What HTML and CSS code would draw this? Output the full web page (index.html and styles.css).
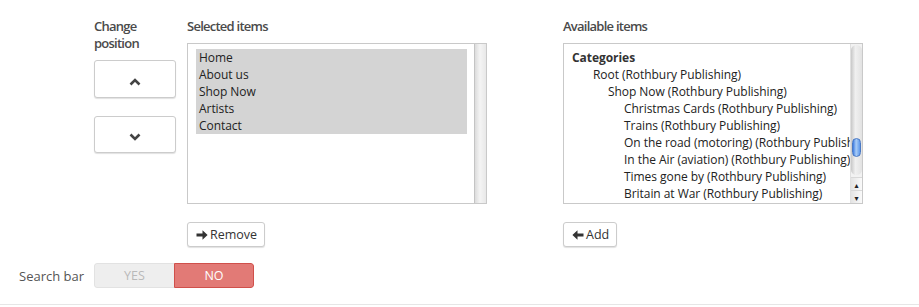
FILE: index.html
```html
<!DOCTYPE html>
<html lang="en">
<head>
    <meta charset="UTF-8">
    <title>Menu items</title>
    <link rel="stylesheet" href="styles.css">
</head>
<body>
    <div class="editor">
        <div class="picker">
            <!-- Move buttons -->
            <div class="position-col">
                <h4 class="col-title">Change position</h4>
                <button class="move-btn up" type="button">
                    <svg width="12" height="8" viewBox="0 0 12 8"><path d="M1.5 6.5L6 2l4.5 4.5" fill="none" stroke="#444" stroke-width="2.6"/></svg>
                </button>
                <button class="move-btn down" type="button">
                    <svg width="12" height="8" viewBox="0 0 12 8"><path d="M1.5 1.5L6 6l4.5-4.5" fill="none" stroke="#444" stroke-width="2.6"/></svg>
                </button>
            </div>

            <!-- Selected items -->
            <div class="list-col">
                <h4 class="col-title">Selected items</h4>
                <div class="listbox">
                    <div class="listbox-body">
                        <div class="selected-group">
                            <div class="opt">Home</div>
                            <div class="opt">About us</div>
                            <div class="opt">Shop Now</div>
                            <div class="opt">Artists</div>
                            <div class="opt">Contact</div>
                        </div>
                    </div>
                    <div class="track plain"></div>
                </div>
                <button class="act-btn" type="button">
                    <svg width="12" height="12" viewBox="0 0 12 12"><path d="M0.5 4.6h6V1.2L11.6 6 6.5 10.8V7.4h-6z" fill="#333"/></svg>
                    Remove
                </button>
            </div>

            <!-- Available items -->
            <div class="list-col available">
                <h4 class="col-title">Available items</h4>
                <div class="listbox">
                    <div class="listbox-body">
                        <div class="group-label">Categories</div>
                        <div class="opt lvl1">Root (Rothbury Publishing)</div>
                        <div class="opt lvl2">Shop Now (Rothbury Publishing)</div>
                        <div class="opt lvl3">Christmas Cards (Rothbury Publishing)</div>
                        <div class="opt lvl3">Trains (Rothbury Publishing)</div>
                        <div class="opt lvl3">On the road (motoring) (Rothbury Publishing)</div>
                        <div class="opt lvl3">In the Air (aviation) (Rothbury Publishing)</div>
                        <div class="opt lvl3">Times gone by (Rothbury Publishing)</div>
                        <div class="opt lvl3">Britain at War (Rothbury Publishing)</div>
                    </div>
                    <div class="track aqua">
                        <div class="aqua-rail">
                            <div class="aqua-thumb"></div>
                        </div>
                        <div class="aqua-arrow">&#9652;</div>
                        <div class="aqua-arrow">&#9662;</div>
                    </div>
                </div>
                <button class="act-btn" type="button">
                    <svg width="12" height="12" viewBox="0 0 12 12"><path d="M11.5 4.6h-6V1.2L0.4 6l5.1 4.8V7.4h6z" fill="#333"/></svg>
                    Add
                </button>
            </div>
        </div>

        <!-- Search bar toggle -->
        <div class="form-row">
            <label class="row-label">Search bar</label>
            <div class="toggle">
                <span class="toggle-opt yes">YES</span>
                <span class="toggle-opt no">NO</span>
            </div>
        </div>
    </div>
</body>
</html>
```

FILE: styles.css
```css
* {
    margin: 0;
    padding: 0;
    box-sizing: border-box;
}

body {
    font-family: 'Open Sans', 'DejaVu Sans', sans-serif;
    font-size: 13px;
    color: #333;
    background: white;
}

.editor {
    height: 305px;
    border-bottom: 1px solid #e6e6e6;
}

.picker {
    display: flex;
    padding: 18px 0 0 94px;
}

.col-title {
    font-family: 'Open Sans', sans-serif;
    font-size: 13px;
    font-weight: 600;
    letter-spacing: -0.75px;
    line-height: 17px;
    color: #4a4a4a;
    margin-bottom: 8px;
}

.position-col {
    width: 82px;
    margin-right: 11px;
    display: flex;
    flex-direction: column;
}

.position-col .col-title {
    width: 60px;
}

.move-btn {
    width: 82px;
    height: 38px;
    background: white;
    border: 1px solid #ccc;
    border-radius: 3px;
    box-shadow: 0 1px 1px rgba(0,0,0,0.12);
    display: flex;
    align-items: center;
    justify-content: center;
    padding-top: 5px;
}

.move-btn.down {
    height: 37px;
    margin-top: 18px;
}

.list-col {
    width: 300px;
}

.list-col.available {
    margin-left: 76px;
}

.listbox {
    display: flex;
    height: 161px;
    border: 1px solid #c9c9c9;
    background: white;
    overflow: hidden;
}

.listbox-body {
    flex: 1;
    min-width: 0;
    overflow: hidden;
    white-space: nowrap;
    padding: 5px 0 0 8px;
    font-size: 12px;
    letter-spacing: -0.05px;
    color: #222;
}

.selected-group {
    background: #d4d4d4;
    width: 271px;
}

.opt {
    line-height: 17px;
    padding-left: 3px;
}

.group-label {
    font-weight: 700;
    line-height: 17px;
    color: #333;
}

.lvl1 { padding-left: 21px; }
.lvl2 { padding-left: 36px; }
.lvl3 { padding-left: 52px; }

.track {
    width: 12px;
    flex-shrink: 0;
}

.track.plain {
    border-left: 1px solid #c4c4c4;
    background: linear-gradient(to right, #dcdcdc, #f4f4f4 45%, #e8e8e8);
}

.track.aqua {
    display: flex;
    flex-direction: column;
    background: #f2f2f2;
    border-left: 1px solid #e0e0e0;
}

.aqua-rail {
    flex: 1;
    margin: 1px 0 2px;
    border-radius: 6px;
    background: linear-gradient(to right, #c8c8c8, #f0f0f0 40%, #e2e2e2);
    padding-top: 93px;
}

.aqua-thumb {
    height: 19px;
    margin: 0 1px;
    border-radius: 5px;
    border: 1px solid #4a79c4;
    background: linear-gradient(to right, #3d7be0, #a9cdf7 45%, #5d97ea);
}

.aqua-arrow {
    height: 13px;
    font-size: 8px;
    line-height: 13px;
    text-align: center;
    color: #222;
    border-top: 1px solid #d8d8d8;
    background: linear-gradient(to right, #e4e4e4, #fafafa);
}

.act-btn {
    margin-top: 18px;
    height: 25px;
    padding: 0 7px 0 8px;
    background: white;
    border: 1px solid #ccc;
    border-radius: 3px;
    box-shadow: 0 1px 1px rgba(0,0,0,0.12);
    font-family: 'Open Sans', sans-serif;
    font-size: 12.5px;
    color: #333;
    display: inline-flex;
    align-items: center;
    gap: 2px;
}

.form-row {
    display: flex;
    align-items: center;
    margin-top: 16px;
}

.row-label {
    width: 94px;
    padding-left: 19px;
    color: #555;
    font-size: 13px;
}

.toggle {
    display: flex;
    height: 25px;
    border-radius: 3px;
    overflow: hidden;
}

.toggle-opt {
    width: 80px;
    display: flex;
    align-items: center;
    justify-content: center;
    font-size: 12.5px;
}

.toggle-opt.yes {
    background: #eeeeee;
    color: #b9b9b9;
    border: 1px solid #e2e2e2;
    border-right: none;
    border-radius: 3px 0 0 3px;
}

.toggle-opt.no {
    background: #e27a76;
    color: white;
    border: 1px solid #d0504b;
    border-radius: 0 3px 3px 0;
}
```
